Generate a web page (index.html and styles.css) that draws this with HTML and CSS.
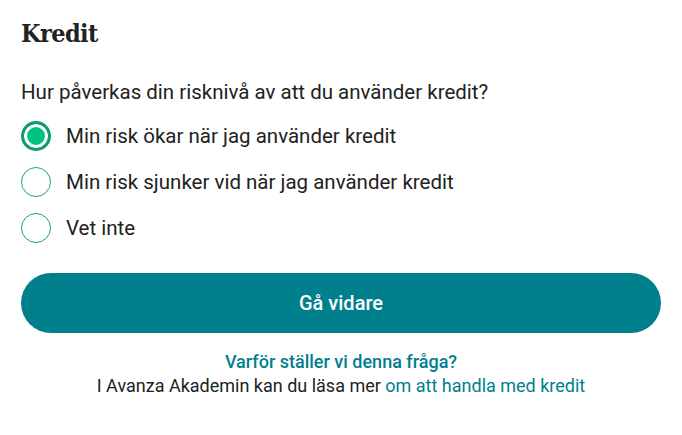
FILE: index.html
```html
<!DOCTYPE html>
<html lang="sv">
<head>
    <meta charset="UTF-8">
    <title>Kredit</title>
    <link rel="stylesheet" href="styles.css">
</head>
<body>
    <div class="card">
        <h2 class="card-title">Kredit</h2>
        <p class="question">Hur påverkas din risknivå av att du använder kredit?</p>
        <ul class="options">
            <li class="option checked"><span class="radio"></span>Min risk ökar när jag använder kredit</li>
            <li class="option"><span class="radio"></span>Min risk sjunker vid när jag använder kredit</li>
            <li class="option"><span class="radio"></span>Vet inte</li>
        </ul>
        <button class="btn-next">Gå vidare</button>
        <div class="info">
            <a class="info-why" href="#">Varför ställer vi denna fråga?</a>
            <p>I Avanza Akademin kan du läsa mer <a href="#">om att handla med kredit</a></p>
        </div>
    </div>
</body>
</html>
```

FILE: styles.css
```css
*{
    margin: 0;
    padding: 0;
    border: none;
    list-style: none;
}
body{
    background-color: #fff;
    font-family: Roboto, "Liberation Sans", sans-serif;
    color: #222;
}
.card{
    padding: 18px 21px;
}
.card-title{
    font-family: "DejaVu Serif Condensed", "DejaVu Serif", serif;
    font-size: 25px;
    font-weight: bold;
    line-height: 32px;
    letter-spacing: -0.6px;
    color: #222;
}
.question{
    margin-top: 30px;
    font-size: 20.5px;
    line-height: 24px;
}
.options{
    margin-top: 9px;
}
.option{
    display: flex;
    align-items: center;
    gap: 15px;
    height: 46px;
    font-size: 20.5px;
}
.radio{
    width: 30px;
    height: 30px;
    box-sizing: border-box;
    border: 1px solid #1aa37a;
    border-radius: 50%;
}
.checked .radio{
    border: 3px solid #139a6e;
    background-color: #00c37f;
    box-shadow: inset 0 0 0 3px #fff;
}
.btn-next{
    display: block;
    width: 100%;
    height: 60px;
    margin-top: 22px;
    border-radius: 30px;
    background-color: #00808c;
    color: #fff;
    font-family: Roboto, sans-serif;
    font-size: 20px;
    font-weight: 500;
}
.info{
    margin-top: 17px;
    text-align: center;
    font-size: 18px;
    line-height: 24px;
}
.info a{
    color: #007f8c;
    text-decoration: none;
}
.info-why{
    font-weight: 500;
}
```
